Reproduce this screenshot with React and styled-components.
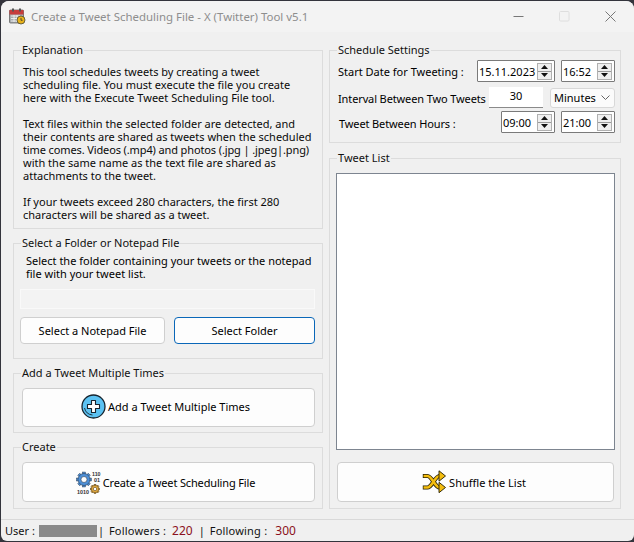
import React from "react";
import styled, { createGlobalStyle } from "styled-components";

const Global = createGlobalStyle`
  html, body { margin: 0; padding: 0; width: 634px; height: 542px; overflow: hidden; background: #33343c; }
  * { box-sizing: border-box; }
  #root { width: 634px; height: 542px; }
`;

const Window = styled.div`
  width: 633px;
  height: 540px;
  margin: 1px 0 0 1px;
  border-radius: 8px 8px 6px 6px;
  background: #f0f0f0;
  overflow: hidden;
  display: flex;
  flex-direction: column;
  font-family: "Noto Sans", sans-serif;
  font-size: 11px;
  color: #000;
`;

const TitleBar = styled.header`
  height: 31px;
  flex: none;
  background: #f3f3f3;
  display: flex;
  align-items: center;
  padding-left: 8px;
  color: #8e8e8e;
  font-size: 11.45px;
`;

const TitleText = styled.span`
  margin-left: 5px;
`;

const WindowButtons = styled.div`
  margin-left: auto;
  margin-right: 1px;
  display: flex;
`;

const WindowButton = styled.div`
  width: 46px;
  height: 31px;
  display: flex;
  align-items: center;
  justify-content: center;
  color: ${(p) => p.$color};
`;

const Main = styled.main`
  flex: 1;
  min-height: 0;
  display: flex;
  gap: 6px;
  padding: 11px 0 10px 12px;
`;

const Column = styled.div`
  width: ${(p) => p.$width}px;
  flex: none;
  display: flex;
  flex-direction: column;
  gap: ${(p) => p.$gap}px;
`;

const Group = styled.fieldset`
  margin: 0;
  min-width: 0;
  height: ${(p) => p.$height}px;
  flex: ${(p) => (p.$grow ? 1 : "none")};
  border: 1px solid #dcdcdc;
  padding: 0;
  display: flex;
  flex-direction: column;
`;

const Legend = styled.legend`
  margin-left: 7px;
  padding: 0 1px;
  height: 15px;
  line-height: 13px;
  color: #111;
`;

const GroupBody = styled.div`
  flex: 1;
  min-height: 0;
  padding: ${(p) => p.$padding};
  display: flex;
  flex-direction: column;
`;

const Paragraph = styled.p`
  margin: 0 0 13px;
  line-height: 13px;
  white-space: nowrap;
  color: #0a0a0a;
  &:last-child { margin-bottom: 0; }
`;

const Tight = styled.span`
  letter-spacing: ${(p) => p.$spacing}px;
`;

const Hint = styled.p`
  margin: 0 0 0 6px;
  line-height: 13px;
  white-space: nowrap;
`;

const PathField = styled.div`
  height: 20px;
  margin-top: 9px;
  background: #f3f3f3;
  border: 1px solid #f9f9f9;
`;

const ButtonRow = styled.div`
  display: flex;
  gap: 9px;
  margin-top: 8px;
`;

const Button = styled.button`
  flex: none;
  width: ${(p) => (p.$width ? `${p.$width}px` : "auto")};
  height: ${(p) => p.$height}px;
  padding: 0 ${(p) => p.$shift || 0}px ${(p) => p.$lift || 0}px 0;
  border-radius: 4px;
  border: 1px solid ${(p) => (p.$primary ? "#0a67b8" : "#cfcfcf")};
  background: #fdfdfd;
  font: inherit;
  color: #000;
  display: flex;
  align-items: center;
  justify-content: center;
  gap: ${(p) => p.$gap ?? 2}px;
`;

const ShuffleButton = styled(Button)`
  margin: 12px 1px 0;
`;

const SettingsRow = styled.div`
  display: flex;
  align-items: center;
  height: ${(p) => p.$height}px;
  margin-top: ${(p) => p.$top}px;
  gap: 6px;
`;

const RowLabel = styled.span`
  margin-right: auto;
  margin-left: ${(p) => p.$left || 0}px;
  padding-top: ${(p) => p.$down || 0}px;
  white-space: nowrap;
  letter-spacing: ${(p) => p.$spacing ?? -0.12}px;
`;

const Spin = styled.div`
  width: ${(p) => p.$width}px;
  height: 22px;
  flex: none;
  border: 1px solid #7a7a7a;
  border-radius: 1px;
  background: #fff;
  display: flex;
  align-items: center;
  padding-left: 1px;
  white-space: nowrap;
`;

const SpinValue = styled.span`
  flex: 1;
  font-size: 11px;
`;

const SpinButtons = styled.div`
  width: 15px;
  height: 17px;
  margin-right: 2px;
  display: flex;
  flex-direction: column;
  border: 1px solid #b0b0b0;
  background: #efefef;
`;

const SpinHalf = styled.div`
  flex: 1;
  display: flex;
  align-items: center;
  justify-content: center;
  & + & { border-top: 1px solid #9a9a9a; }
`;

const NumberInput = styled.div`
  width: 54px;
  height: 21px;
  flex: none;
  margin-left: -3px;
  background: #fff;
  border-bottom: 1px solid #8a8a8a;
  text-align: center;
  line-height: 17px;
`;

const Select = styled.div`
  width: 65px;
  height: 20px;
  flex: none;
  margin-left: 1px;
  background: #fbfbfb;
  border: 1px solid #d8d8d8;
  border-radius: 3px;
  display: flex;
  align-items: center;
  justify-content: space-between;
  padding: 0 4px 0 3px;
`;

const ListBox = styled.div`
  flex: 1;
  background: #fff;
  border: 1px solid #7d8590;
`;

const StatusBar = styled.footer`
  height: 22px;
  flex: none;
  border-top: 1px solid #d9d9d9;
  padding-left: 4px;
  display: flex;
  align-items: center;
  white-space: nowrap;
  color: #111;
`;

const Masked = styled.span`
  width: 58px;
  height: 12px;
  margin-left: 4px;
  background: #8a8a8a;
`;

const Count = styled.span`
  color: #8b1020;
  margin-left: ${(p) => p.$left}px;
  font-size: 12px;
`;

const Sep = styled.span`
  margin: 0 5px 0 ${(p) => p.$left}px;
`;

const Stat = styled.span`
  letter-spacing: 0.2px;
`;

const Arrows = () => (
  <SpinButtons>
    <SpinHalf>
      <svg width="7" height="4" viewBox="0 0 7 4"><path d="M3.5 0 7 4H0z" fill="#111" /></svg>
    </SpinHalf>
    <SpinHalf>
      <svg width="7" height="4" viewBox="0 0 7 4"><path d="M0 0h7L3.5 4z" fill="#111" /></svg>
    </SpinHalf>
  </SpinButtons>
);

const CalendarIcon = () => (
  <svg width="17" height="17" viewBox="0 0 17 17">
    <rect x="0.5" y="2" width="14" height="13" rx="1" fill="#a9adb0" stroke="#555" strokeWidth="0.7" />
    <rect x="0.5" y="2" width="14" height="4.5" fill="#c73c3c" />
    <rect x="3" y="0.5" width="2" height="3" fill="#555" />
    <rect x="10" y="0.5" width="2" height="3" fill="#555" />
    <path d="M2 8h9M2 10.500h7M2 13h6M5 7v7M8 7v7" stroke="#f2f2f2" strokeWidth="0.9" />
    <circle cx="12" cy="12" r="4" fill="#e8b21b" stroke="#4a4a3a" strokeWidth="0.8" />
    <path d="M12 10v2.300h1.600" stroke="#333" strokeWidth="0.8" fill="none" />
  </svg>
);

const AddIcon = () => (
  <svg width="25" height="25" viewBox="0 0 25 25">
    <circle cx="12.500" cy="12.500" r="11.500" fill="#5cc2f2" stroke="#17242e" strokeWidth="1.300" />
    <path d="M3.500 14a9 9 0 0 0 8 7" fill="none" stroke="#17242e" strokeWidth="0.900" />
    <path d="M10.500 6.500h4v4h4v4h-4v4h-4v-4h-4v-4h4z" fill="#fff" stroke="#17242e" strokeWidth="1.100" strokeLinejoin="round" />
  </svg>
);

const Gear = ({ cx, cy, r, hole, teeth, fill, stroke }) => {
  const spokes = Array.from({ length: teeth }, (_, i) => (i * 360) / teeth);
  return (
    <g>
      {spokes.map((a) => (
        <rect key={a} x={cx - r * 0.24} y={cy - r - r * 0.24} width={r * 0.48} height={r * 0.6} fill={fill} stroke={stroke} strokeWidth="0.500" transform={`rotate(${a} ${cx} ${cy})`} />
      ))}
      <circle cx={cx} cy={cy} r={r} fill={fill} stroke={stroke} strokeWidth="0.600" />
      <circle cx={cx} cy={cy} r={hole} fill="#fdfdfd" stroke={stroke} strokeWidth="0.600" />
    </g>
  );
};

const BitText = styled.text`
  font-family: "Liberation Sans", sans-serif;
  font-size: 6px;
  font-weight: 700;
  fill: #333;
`;

const GearsIcon = () => (
  <svg width="25" height="25" viewBox="0 0 25 25">
    <Gear cx={8} cy={9.500} r={6} hole={3} teeth={8} fill="#4d8fd6" stroke="#2c3e55" />
    <Gear cx={19} cy={19} r={3.800} hole={1.700} teeth={8} fill="#e3a93c" stroke="#5a4520" />
    <BitText x="16" y="6" textLength="8.500" lengthAdjust="spacingAndGlyphs">110</BitText>
    <BitText x="18" y="12" textLength="6" lengthAdjust="spacingAndGlyphs">01</BitText>
    <BitText x="1" y="23.500" textLength="12" lengthAdjust="spacingAndGlyphs">1010</BitText>
  </svg>
);

const ShuffleIcon = () => (
  <svg width="24" height="24" viewBox="0 0 24 24">
    <g fill="none" strokeLinejoin="round">
      <path d="M0.800 6H5.500C10 6 13 17.500 17.500 17.500H20" stroke="#241d00" strokeWidth="4.200" />
      <path d="M0.800 17.500H5.500C10 17.500 13 6 17.500 6H20" stroke="#241d00" strokeWidth="4.200" />
      <path d="M1.500 6H5.500C10 6 13 17.500 17.500 17.500H20" stroke="#f4bd0e" strokeWidth="2.600" />
      <path d="M1.500 17.500H5.500C10 17.500 13 6 17.500 6H20" stroke="#f4bd0e" strokeWidth="2.600" />
    </g>
    <path d="M17 0.800 23.500 6 17 11.200z" fill="#f4bd0e" stroke="#241d00" strokeWidth="0.900" strokeLinejoin="round" />
    <path d="M17 12.300 23.500 17.500 17 22.700z" fill="#f4bd0e" stroke="#241d00" strokeWidth="0.900" strokeLinejoin="round" />
  </svg>
);

export default function App() {
  return (
    <>
      <Global />
      <Window>
        <TitleBar>
          <CalendarIcon />
          <TitleText>Create a Tweet Scheduling File - X (Twitter) Tool v5.1</TitleText>
          <WindowButtons>
            <WindowButton $color="#777">
              <svg width="11" height="11" viewBox="0 0 11 11"><path d="M0.500 5.500h10" stroke="currentColor" /></svg>
            </WindowButton>
            <WindowButton $color="#dedede">
              <svg width="11" height="11" viewBox="0 0 11 11"><rect x="0.500" y="0.500" width="9.500" height="9.500" rx="1" fill="none" stroke="currentColor" /></svg>
            </WindowButton>
            <WindowButton $color="#777">
              <svg width="11" height="11" viewBox="0 0 11 11"><path d="M0.500 0.500 10.500 10.500M10.500 0.500 0.500 10.500" stroke="currentColor" /></svg>
            </WindowButton>
          </WindowButtons>
        </TitleBar>
        <Main>
          <Column $width={310} $gap={7}>
            <Group $height={186}>
              <Legend>Explanation</Legend>
              <GroupBody $padding="7px 9px 0">
                <Paragraph>This tool schedules tweets by creating a tweet<br />scheduling file. You must execute the file you create<br />here with the Execute Tweet Scheduling File tool.</Paragraph>
                <Paragraph>Text files within the selected folder are detected, and<br />their contents are shared as tweets when the scheduled<br /><Tight $spacing={-0.12}>time comes. Videos (.mp4) and photos (.jpg | .jpeg|.png)</Tight><br />with the same name as the text file are shared as<br />attachments to the tweet.</Paragraph>
                <Paragraph>If your tweets exceed 280 characters, the first 280<br />characters will be shared as a tweet.</Paragraph>
              </GroupBody>
            </Group>
            <Group $height={123}>
              <Legend>Select a Folder or Notepad File</Legend>
              <GroupBody $padding="3px 7px 0 6px">
                <Hint>Select the folder containing your tweets or the notepad<br />file with your tweet list.</Hint>
                <PathField />
                <ButtonRow>
                  <Button $width={145} $height={27}>Select a Notepad File</Button>
                  <Button $width={141} $height={27} $primary>Select Folder</Button>
                </ButtonRow>
              </GroupBody>
            </Group>
            <Group $height={67}>
              <Legend>Add a Tweet Multiple Times</Legend>
              <GroupBody $padding="7px 7px 0 8px">
                <Button $height={39} $shift={6} $lift={2}><AddIcon />Add a Tweet Multiple Times</Button>
              </GroupBody>
            </Group>
            <Group $height={69}>
              <Legend>Create</Legend>
              <GroupBody $padding="7px 7px 0 8px">
                <Button $height={40} $shift={6}><GearsIcon /><Tight $spacing={-0.15}>Create a Tweet Scheduling File</Tight></Button>
              </GroupBody>
            </Group>
          </Column>
          <Column $width={292} $gap={8}>
            <Group $height={100}>
              <Legend>Schedule Settings</Legend>
              <GroupBody $padding="0 5px 0 8px">
                <SettingsRow $height={22} $top={2}>
                  <RowLabel $spacing={0}>Start Date for Tweeting :</RowLabel>
                  <Spin $width={78}><SpinValue>15.11.2023</SpinValue><Arrows /></Spin>
                  <Spin $width={54}><SpinValue>16:52</SpinValue><Arrows /></Spin>
                </SettingsRow>
                <SettingsRow $height={21} $top={5}>
                  <RowLabel $down={1}>Interval Between Two Tweets</RowLabel>
                  <NumberInput>30</NumberInput>
                  <Select>Minutes
                    <svg width="9" height="5" viewBox="0 0 9 5"><path d="M0.500 0.500 4.500 4.500 8.500 0.500" fill="none" stroke="#666" /></svg>
                  </Select>
                </SettingsRow>
                <SettingsRow $height={22} $top={3}>
                  <RowLabel $left={1} $down={3}>Tweet Between Hours :</RowLabel>
                  <Spin $width={54}><SpinValue>09:00</SpinValue><Arrows /></Spin>
                  <Spin $width={54}><SpinValue>21:00</SpinValue><Arrows /></Spin>
                </SettingsRow>
              </GroupBody>
            </Group>
            <Group $grow>
              <Legend>Tweet List</Legend>
              <GroupBody $padding="7px 5px 6px 6px">
                <ListBox />
                <ShuffleButton $height={40} $shift={3} $gap={3}><ShuffleIcon />Shuffle the List</ShuffleButton>
              </GroupBody>
            </Group>
          </Column>
        </Main>
        <StatusBar>
          User :<Masked /><Sep $left={1}>|</Sep><Stat>Followers :</Stat><Count $left={6}>220</Count><Sep $left={6}>|</Sep><Stat>Following :</Stat><Count $left={8}>300</Count>
        </StatusBar>
      </Window>
    </>
  );
}
